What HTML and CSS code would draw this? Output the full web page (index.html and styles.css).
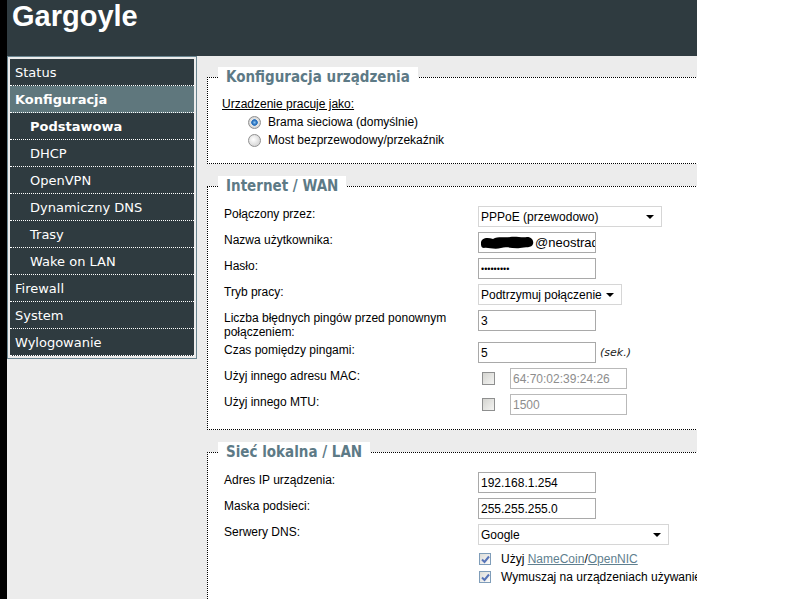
FILE: index.html
```html
<!DOCTYPE html>
<html lang="pl">
<head>
    <meta charset="UTF-8">
    <title>Gargoyle - Podstawowa</title>
    <link rel="stylesheet" href="styles.css">
</head>
<body>
    <div class="page">
        <header class="top">
            <h1>Gargoyle</h1>
        </header>
        <div class="layout">
            <nav class="menu">
                <a href="#" class="item">Status</a>
                <a href="#" class="item active">Konfiguracja</a>
                <a href="#" class="item sub current">Podstawowa</a>
                <a href="#" class="item sub">DHCP</a>
                <a href="#" class="item sub">OpenVPN</a>
                <a href="#" class="item sub">Dynamiczny DNS</a>
                <a href="#" class="item sub">Trasy</a>
                <a href="#" class="item sub">Wake on LAN</a>
                <a href="#" class="item">Firewall</a>
                <a href="#" class="item">System</a>
                <a href="#" class="item">Wylogowanie</a>
            </nav>
            <main class="content">
                <fieldset class="box first">
                    <legend>Konfiguracja urządzenia</legend>
                    <div class="question">Urzadzenie pracuje jako:</div>
                    <label class="option"><input type="radio" name="mode" checked>Brama sieciowa (domyślnie)</label>
                    <label class="option"><input type="radio" name="mode">Most bezprzewodowy/przekaźnik</label>
                </fieldset>

                <fieldset class="box">
                    <legend>Internet / WAN</legend>
                    <div class="row">
                        <label>Połączony przez:</label>
                        <div class="select wide">
                            <span>PPPoE (przewodowo)</span>
                            <span class="arrow"></span>
                        </div>
                    </div>
                    <div class="row">
                        <label>Nazwa użytkownika:</label>
                        <div class="field user">
                            <svg class="blob" width="54" height="15" viewBox="0 0 54 15">
                                <path d="M1 8 C1 3 7 2 13 4 C18 1 25 3 30 2 C36 1 42 3 47 2 C52 2 54 6 53 9 C52 13 45 12 40 13 C33 14 27 11 21 13 C14 15 8 12 4 13 C1 13 1 10 1 8 Z" fill="#000"/>
                            </svg><span>@neostrada.pl</span>
                        </div>
                    </div>
                    <div class="row">
                        <label>Hasło:</label>
                        <input class="field pass" type="password" value="123456789">
                    </div>
                    <div class="row">
                        <label>Tryb pracy:</label>
                        <div class="select mid">
                            <span>Podtrzymuj połączenie</span>
                            <span class="arrow"></span>
                        </div>
                    </div>
                    <div class="row tall">
                        <label>Liczba błędnych pingów przed ponownym połączeniem:</label>
                        <input class="field" type="text" value="3">
                    </div>
                    <div class="row">
                        <label>Czas pomiędzy pingami:</label>
                        <input class="field" type="text" value="5">
                        <em class="unit">(sek.)</em>
                    </div>
                    <div class="row">
                        <label>Użyj innego adresu MAC:</label>
                        <span class="cb"></span>
                        <input class="field off" type="text" value="64:70:02:39:24:26" disabled>
                    </div>
                    <div class="row">
                        <label>Użyj innego MTU:</label>
                        <span class="cb"></span>
                        <input class="field off" type="text" value="1500" disabled>
                    </div>
                </fieldset>

                <fieldset class="box">
                    <legend>Sieć lokalna / LAN</legend>
                    <div class="row">
                        <label>Adres IP urządzenia:</label>
                        <input class="field" type="text" value="192.168.1.254">
                    </div>
                    <div class="row">
                        <label>Maska podsieci:</label>
                        <input class="field" type="text" value="255.255.255.0">
                    </div>
                    <div class="row">
                        <label>Serwery DNS:</label>
                        <div class="select dns">
                            <span>Google</span>
                            <span class="arrow"></span>
                        </div>
                    </div>
                    <div class="checks">
                        <div class="check">
                            <span class="cb on"><svg width="9" height="9" viewBox="0 0 9 9"><path d="M1 4.5 L3.5 7 L8 1.5" fill="none" stroke="#5774b8" stroke-width="2"/></svg></span>
                            <span>Użyj <a href="#">NameCoin</a>/<a href="#">OpenNIC</a></span>
                        </div>
                        <div class="check">
                            <span class="cb on"><svg width="9" height="9" viewBox="0 0 9 9"><path d="M1 4.5 L3.5 7 L8 1.5" fill="none" stroke="#5774b8" stroke-width="2"/></svg></span>
                            <span>Wymuszaj na urządzeniach używanie tych serwerów DNS</span>
                        </div>
                    </div>
                </fieldset>
            </main>
        </div>
    </div>
</body>
</html>
```

FILE: styles.css
```css
body {
    margin: 0;
    background-color: #fff;
    font-family: "Liberation Sans", Arial, sans-serif;
    font-size: 12px;
    color: #000;
}

.page {
    width: 690px;
    height: 599px;
    border-left: 7px solid #000;
    background-color: #ececec;
    overflow: hidden;
}

.top {
    height: 56px;
    background-color: #2f3b40;
    padding-left: 5px;
}

.top h1 {
    margin: 0;
    color: #fff;
    font-size: 29px;
    line-height: 32px;
    font-weight: bold;
}

.layout {
    display: flex;
    align-items: flex-start;
}

/* left menu */
.menu {
    flex: none;
    width: 184px;
    padding: 2px;
    border: 1px solid #6a8590;
    background-color: #ececec;
}

.item {
    display: block;
    height: 26px;
    line-height: 27px;
    padding-left: 5px;
    border-bottom: 1px dotted #fff;
    background-color: #2f3b40;
    color: #fff;
    text-decoration: none;
    font-family: "DejaVu Sans", Verdana, sans-serif;
    font-size: 13px;
    white-space: nowrap;
}

.item.sub {
    padding-left: 20px;
}

.item.active {
    background-color: #5f777d;
    font-weight: bold;
}

.item.current {
    font-weight: bold;
}

/* content */
.content {
    flex: 1;
    min-width: 0;
    padding: 11px 0 0 10px;
}

.box {
    width: 560px;
    margin: 0 0 12px;
    padding: 10px 0 14px 14px;
    border: 1px dotted #000;
    border-right: none;
    background-color: #fff;
}

.box legend {
    margin-left: -4px;
    padding: 0 8px;
    background-color: #fff;
    color: #5d7a86;
    font-family: "DejaVu Sans Condensed", "DejaVu Sans", sans-serif;
    font-stretch: condensed;
    font-weight: bold;
    font-size: 15px;
    line-height: 20px;
}

.question {
    line-height: 14px;
    text-decoration: underline;
    margin-bottom: 2px;
}

.option {
    display: flex;
    align-items: center;
    height: 18px;
    padding-left: 26px;
}

.option input {
    appearance: none;
    width: 13px;
    height: 13px;
    margin: 0 7px 0 0;
    border: 1px solid #8f8f8f;
    border-radius: 50%;
    background: radial-gradient(circle at 40% 40%, #fff 0, #dcdcdc 6px);
}

.option input:checked {
    background: radial-gradient(circle, #8cc4ef 0, #2068b8 2.5px, #3b7fc4 3px, #e6e6e6 3.6px, #d2d2d2 6px);
}

.row {
    display: flex;
    align-items: flex-start;
    padding-left: 2px;
    margin-bottom: 5px;
}

.row:last-child {
    margin-bottom: 0;
}

.row.tall {
    margin-bottom: 3px;
}

.row label {
    flex: none;
    width: 254px;
    padding-top: 1px;
    line-height: 14px;
}

.field {
    box-sizing: border-box;
    width: 118px;
    height: 21px;
    margin: 0;
    padding: 0 2px;
    border: 1px solid #a9a9a9;
    background-color: #fff;
    font-family: "Liberation Sans", Arial, sans-serif;
    font-size: 12px;
    color: #000;
    outline: none;
}

.field.user {
    display: flex;
    align-items: center;
    overflow: hidden;
    white-space: nowrap;
    padding-left: 1px;
    font-size: 13px;
}

.blob {
    flex: none;
    margin-right: 1px;
}

.field.pass {
    font-size: 9px;
    letter-spacing: 0;
}

.field.off {
    width: 117px;
    color: #8d8d8d;
    border-color: #b9b9b9;
}

.cb {
    flex: none;
    box-sizing: border-box;
    width: 13px;
    height: 13px;
    border: 1px solid #8e8f8f;
    background: linear-gradient(135deg, #d4d4d0, #f4f4f2);
    display: flex;
    align-items: center;
    justify-content: center;
}

.row .cb {
    margin: 4px 15px 0 4px;
}

.cb.on {
    border-color: #7f9db9;
    background: linear-gradient(135deg, #dcdcd8, #fcfcfb);
}

.select {
    box-sizing: border-box;
    display: flex;
    align-items: center;
    justify-content: space-between;
    height: 21px;
    padding: 0 7px 0 2px;
    border: 1px solid #d6d6d6;
    background-color: #fff;
    font-size: 12px;
    white-space: nowrap;
}

.select.wide {
    width: 184px;
}

.select.mid {
    width: 144px;
}

.select.dns {
    width: 191px;
}

.arrow {
    width: 0;
    height: 0;
    border-left: 4px solid transparent;
    border-right: 4px solid transparent;
    border-top: 4px solid #000;
}

.unit {
    margin: 4px 0 0 4px;
    font-family: "DejaVu Sans", Verdana, sans-serif;
    font-size: 11px;
    color: #222;
}

.checks {
    margin: 4px 0 0 256px;
}

.check {
    display: flex;
    align-items: center;
    height: 18px;
    white-space: nowrap;
}

.check .cb {
    width: 12px;
    height: 12px;
    margin: 0 10px 0 1px;
}

.check a {
    color: #5f7f8f;
}
```
